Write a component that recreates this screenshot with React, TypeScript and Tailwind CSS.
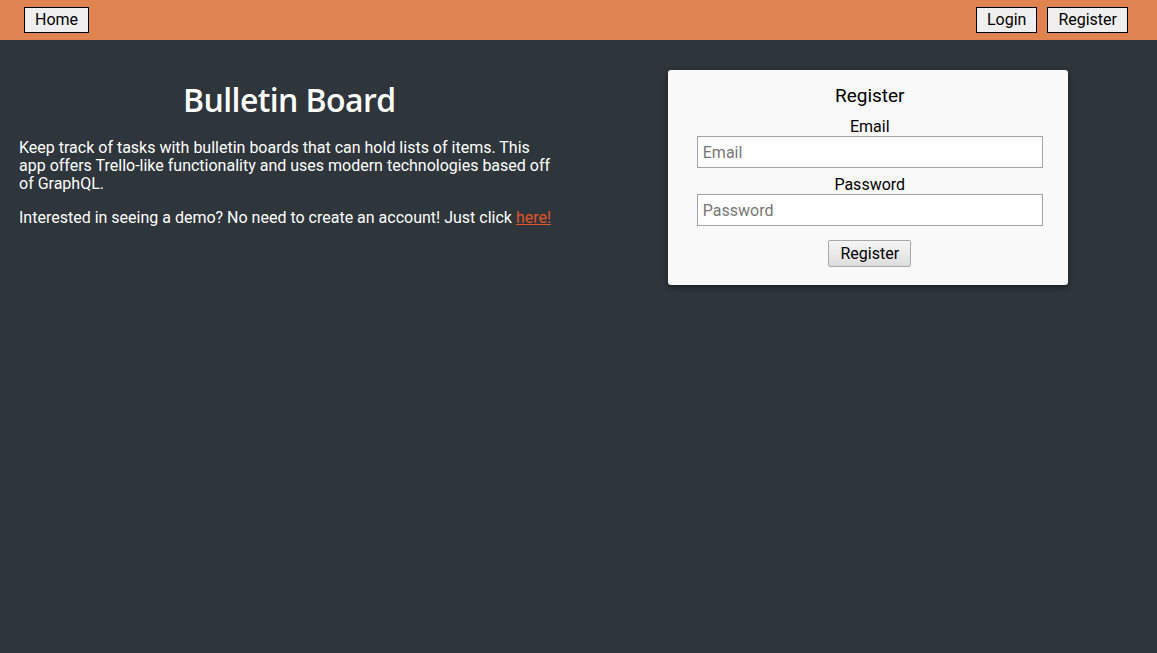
export default function App() {
  return (
    <div className="min-h-[653px] bg-[#2e353b] font-['Roboto',sans-serif] text-[16px]">
      <nav className="h-[40px] bg-[#e08551] flex items-center justify-between pl-[24px] pr-[29px]">
        <button className="h-[26px] px-[10px] bg-[#efefef] border border-black text-black leading-[18px]">Home</button>
        <div className="flex gap-[10px]">
          <button className="h-[26px] px-[10px] bg-[#efefef] border border-black text-black leading-[18px]">Login</button>
          <button className="h-[26px] px-[10px] bg-[#efefef] border border-black text-black leading-[18px]">Register</button>
        </div>
      </nav>

      <main className="grid grid-cols-2">
        <section className="px-[19px] text-white">
          <h1 className="mt-[38px] text-center font-['Open_Sans',sans-serif] font-semibold text-[32px] leading-[44px] tracking-[-0.6px]">
            Bulletin Board
          </h1>
          <p className="mt-[17px] leading-[18px]">
            Keep track of tasks with bulletin boards that can hold lists of items. This app offers Trello-like functionality and uses modern technologies based off of GraphQL.
          </p>
          <p className="mt-[16px] leading-[18px]">
            Interested in seeing a demo? No need to create an account! Just click{" "}
            <a href="#" className="text-[#e0562a] underline">here!</a>
          </p>
        </section>

        <section className="flex justify-center pt-[30px]">
          <form className="w-[400px] bg-[#f9f9f9] rounded-[3px] shadow-[0_2px_6px_rgba(0,0,0,0.45)] pt-[14px] pb-[18px] pl-[29px] pr-[25px] flex flex-col items-center text-black">
            <h2 className="text-[19px] leading-[24px]">Register</h2>
            <label className="mt-[10px] leading-[18px]">Email</label>
            <input
              placeholder="Email"
              className="w-full h-[32px] border border-[#a3a3a3] bg-white px-[5px] placeholder:text-[#777] outline-none"
            />
            <label className="mt-[8px] leading-[18px]">Password</label>
            <input
              type="password"
              placeholder="Password"
              className="w-full h-[32px] border border-[#a3a3a3] bg-white px-[5px] placeholder:text-[#777] outline-none"
            />
            <button
              type="button"
              className="mt-[14px] h-[27px] px-[11px] border border-[#a9a9a9] rounded-[2px] bg-gradient-to-b from-[#f6f6f6] to-[#dddddd] leading-[18px]"
            >
              Register
            </button>
          </form>
        </section>
      </main>
    </div>
  );
}
